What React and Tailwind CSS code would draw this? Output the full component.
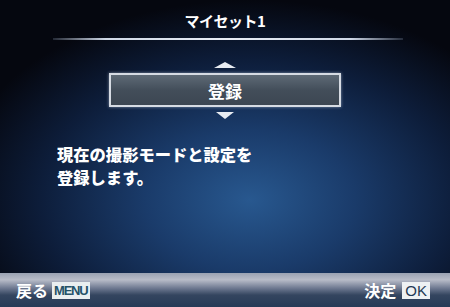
export default function App() {
  const font = { fontFamily: '"Noto Sans CJK JP", "Noto Sans", sans-serif' };
  return (
    <div
      className="w-[450px] h-[307px] overflow-hidden flex flex-col text-white font-bold bg-[radial-gradient(ellipse_300px_200px_at_250px_200px,#28588f_0%,#1a3b6a_35%,#0d1d3a_70%,#05070f_100%)]"
      style={font}
    >
      <div className="h-[38px] flex items-center justify-center text-[15px] leading-none pt-[2px] tracking-[-0.5px]">
        マイセット1
      </div>
      <div className="mx-[53px] w-[350px] h-[2px] bg-[linear-gradient(90deg,rgba(160,180,210,0.2),#cfd8e6_15%,#e8edf5_50%,#cfd8e6_85%,rgba(160,180,210,0.2))]" />
      <div className="flex flex-col items-center mt-[22px]">
        <div className="w-0 h-0 border-l-[11px] border-r-[11px] border-b-[6px] border-l-transparent border-r-transparent border-b-[#e8ecf2]" />
        <div className="mt-[5px] w-[232px] h-[34px] border-2 border-[#d6dbe3] bg-[linear-gradient(180deg,#5e6a76,#434e5a_50%,#3c4652)] flex items-center justify-center text-[17px] leading-none shadow-[0_0_3px_rgba(200,210,230,0.6)]">
          登録
        </div>
        <div className="mt-[5px] w-0 h-0 border-l-[9px] border-r-[9px] border-t-[7px] border-l-transparent border-r-transparent border-t-[#e8ecf2]" />
      </div>
      <div className="mt-[24px] ml-[57px] text-[16.3px] leading-[23px] font-extrabold">
        <div>現在の撮影モードと設定を</div>
        <div>登録します。</div>
      </div>
      <div className="mt-auto h-[34px] flex items-center justify-between pl-[16px] pr-[20px] bg-[linear-gradient(180deg,#9aa2b2_0%,#b8bcc8_20%,#6d7890_45%,#34455f_65%,#263a57_100%)]">
        <div className="flex items-center gap-[4px]">
          <span className="text-[16px] leading-none">戻る</span>
          <span className="bg-[#e9eef0] text-[#245268] text-[13px] leading-none px-[2px] py-[2px] tracking-[-1.2px] font-bold" style={{ fontFamily: '"Liberation Sans", sans-serif' }}>MENU</span>
        </div>
        <div className="flex items-center gap-[6px]">
          <span className="text-[16px] leading-none">決定</span>
          <span className="bg-[#eef1f3] text-[#1f3a55] text-[15px] leading-none px-[3px] py-[1px] font-normal" style={{ fontFamily: '"Liberation Sans", sans-serif' }}>OK</span>
        </div>
      </div>
    </div>
  );
}
